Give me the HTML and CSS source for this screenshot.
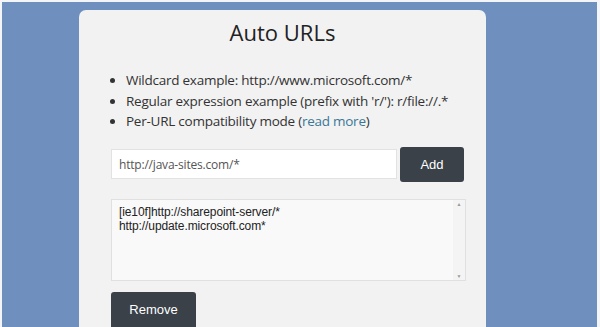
FILE: index.html
```html
<!DOCTYPE html>
<html lang="en">
<head>
    <meta charset="UTF-8">
    <meta name="viewport" content="width=device-width, initial-scale=1.0">
    <title>Auto URLs</title>
    <link rel="stylesheet" href="styles.css">
</head>
<body>

<div class="page">
    <!-- Settings Card -->
    <div class="card">
        <h1 class="card-title">Auto URLs</h1>

        <ul class="hints">
            <li>Wildcard example: http://www.microsoft.com/*</li>
            <li>Regular expression example (prefix with 'r/'): r/file://.*</li>
            <li>Per-URL compatibility mode (<a href="#">read more</a>)</li>
        </ul>

        <!-- Add Row -->
        <div class="add-row">
            <input class="url-input" type="text" value="http://java-sites.com/*">
            <button class="btn add-button">Add</button>
        </div>

        <!-- URL List -->
        <div class="url-list">
            <div class="url-lines">[ie10f]http://sharepoint-server/*<br>http://update.microsoft.com*</div>
            <div class="scroll-track">
                <span class="arrow">&#9650;</span>
                <span class="arrow">&#9660;</span>
            </div>
        </div>

        <button class="btn remove-button">Remove</button>
    </div>
</div>

</body>
</html>
```

FILE: styles.css
```css
/* Page frame */
html, body {
    margin: 0;
    height: 100%;
}

body {
    background-color: #f3f5f8;
    padding: 2px 3px 0 2px;
    box-sizing: border-box;
    overflow: hidden;
}

.page {
    height: 100%;
    background-color: #6f8fbe;
    padding-top: 8px;
    padding-left: 77px;
    box-sizing: border-box;
    overflow: hidden;
}

/* Card */
.card {
    width: 407px;
    height: 400px;
    box-sizing: border-box;
    background-color: #f2f2f2;
    border-radius: 7px;
    padding: 6px 20px 0 32px;
    font-family: "Open Sans", sans-serif;
    color: #333;
}

.card-title {
    margin: 0 0 22px -12px;
    text-align: center;
    font-size: 22px;
    font-weight: normal;
    color: #222;
    line-height: 32px;
}

/* Hints list */
.hints {
    margin: 0 0 15px 0;
    padding-left: 15px;
    font-size: 13.5px;
    letter-spacing: -0.25px;
    line-height: 20.5px;
}

.hints a {
    color: #3b7897;
    text-decoration: none;
}

/* Add row */
.add-row {
    display: flex;
    align-items: center;
    gap: 3px;
}

.url-input {
    width: 286px;
    height: 30px;
    box-sizing: border-box;
    border: 1px solid #e2e2e2;
    background-color: #fff;
    padding: 0 7px;
    font-family: "Open Sans", sans-serif;
    font-size: 12px;
    letter-spacing: -0.2px;
    color: #555;
    outline: none;
}

.btn {
    background-color: #3a4148;
    color: #fff;
    border: none;
    border-radius: 3px;
    font-family: "Liberation Sans", Arial, sans-serif;
    font-size: 13px;
    cursor: pointer;
}

.add-button {
    width: 64px;
    height: 35px;
}

/* URL list */
.url-list {
    display: flex;
    width: 355px;
    height: 82px;
    box-sizing: border-box;
    margin-top: 17px;
    border: 1px solid #e0e0e0;
    background-color: #f9f9f9;
}

.url-lines {
    flex: 1;
    padding: 5px 7px;
    font-family: "Liberation Sans", Arial, sans-serif;
    font-size: 12px;
    letter-spacing: -0.1px;
    line-height: 14px;
    color: #222;
}

.scroll-track {
    width: 12px;
    display: flex;
    flex-direction: column;
    justify-content: space-between;
    align-items: center;
    background-color: #f4f4f4;
    padding: 1px 0;
}

.arrow {
    font-size: 5px;
    color: #999;
    line-height: 6px;
}

.remove-button {
    display: block;
    margin-top: 11px;
    width: 85px;
    height: 40px;
    padding-bottom: 6px;
}
```
